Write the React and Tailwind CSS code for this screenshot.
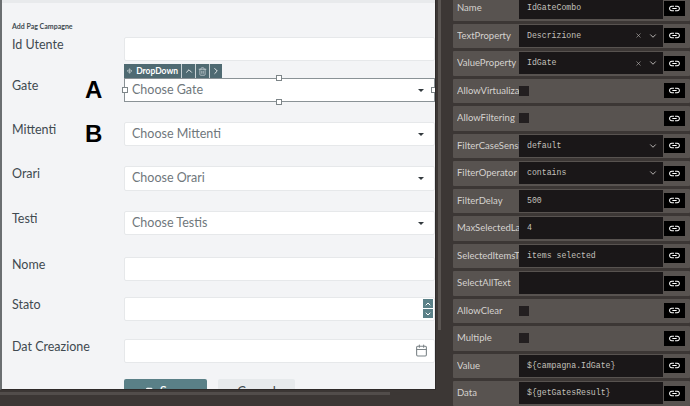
import { Move, ChevronUp, ChevronDown, ChevronRight, Trash2, Calendar, X, Save } from 'lucide-react';
import { MdLink } from 'react-icons/md';

const fields = [
  { label: 'Id Utente', top: 'mt-[34px]', height: 'h-6' },
  { label: 'Gate', top: 'mt-[17px]', height: 'h-6', placeholder: 'Choose Gate', selected: true, mark: 'A' },
  { label: 'Mittenti', top: 'mt-5', height: 'h-6', placeholder: 'Choose Mittenti', mark: 'B' },
  { label: 'Orari', top: 'mt-5', height: 'h-[25px]', placeholder: 'Choose Orari' },
  { label: 'Testi', top: 'mt-5', height: 'h-6', placeholder: 'Choose Testis' },
  { label: 'Nome', top: 'mt-[22px]', height: 'h-6' },
  { label: 'Stato', top: 'mt-4', height: 'h-6', spinner: true },
  { label: 'Dat Creazione', top: 'mt-[18px]', height: 'h-6', date: true },
];

const props = [
  { name: 'Name', value: 'IdGateCombo' },
  { name: 'TextProperty', value: 'Descrizione', select: true },
  { name: 'ValueProperty', value: 'IdGate', select: true },
  { name: 'AllowVirtualizati...', check: true },
  { name: 'AllowFiltering', check: true },
  { name: 'FilterCaseSensiti...', value: 'default', arrow: true },
  { name: 'FilterOperator', value: 'contains', arrow: true },
  { name: 'FilterDelay', value: '500' },
  { name: 'MaxSelectedLab...', value: '4' },
  { name: 'SelectedItemsText', value: 'items selected' },
  { name: 'SelectAllText', value: '' },
  { name: 'AllowClear', check: true },
  { name: 'Multiple', check: true },
  { name: 'Value', value: '${campagna.IdGate}' },
  { name: 'Data', value: '${getGatesResult}' },
];

function Handle({ className }) {
  return <span className={`absolute w-[6px] h-[6px] bg-white border border-[#7d8588] ${className}`} />;
}

function Field({ field }) {
  return (
    <div className={`relative flex ${field.top}`}>
      <div className="w-[112px] text-[12.5px] leading-[16px] text-[#3f4a50]">{field.label}</div>
      {field.mark && (
        <span className="absolute left-[73px] top-[-1px] font-['Liberation_Sans'] font-bold text-[24px] leading-[26px] text-black">{field.mark}</span>
      )}
      <div
        className={`relative flex-1 flex items-center pl-[7px] pr-[10px] bg-white rounded-[2px] border ${field.height} ${field.selected ? 'border-[#8a9296] rounded-none' : 'border-[#e6e8ea]'}`}
      >
        {field.placeholder && <span className="flex-1 text-[12.5px] text-[#6f777c]">{field.placeholder}</span>}
        {field.placeholder && <span className="w-0 h-0 border-x-[3px] border-x-transparent border-t-[3px] border-t-[#333a3e]" />}
        {field.spinner && (
          <div className="absolute right-[1px] top-[1px] flex flex-col gap-[1px]">
            <span className="flex items-center justify-center w-[10px] h-[9px] bg-[#5a8087] text-white"><ChevronUp size={8} strokeWidth={3} /></span>
            <span className="flex items-center justify-center w-[10px] h-[9px] bg-[#5a8087] text-white"><ChevronDown size={8} strokeWidth={3} /></span>
          </div>
        )}
        {field.date && <Calendar size={13} className="absolute right-[6px] top-[4px] text-[#7b8387]" />}
        {field.selected && (
          <>
            <div className="absolute left-[-1px] top-[-15px] flex h-[14px] bg-[#4f6a72] text-white text-[8.5px] font-bold">
              <span className="flex items-center gap-[4px] px-[3px] w-[57px]"><Move size={10} />DropDown</span>
              <span className="flex items-center justify-center w-[14px] border-l border-[#c9d2d5]"><ChevronUp size={10} /></span>
              <span className="flex items-center justify-center w-[14px] border-l border-[#c9d2d5]"><Trash2 size={9} className="text-[#c9d2d5]" /></span>
              <span className="flex items-center justify-center w-[13px] border-l border-[#c9d2d5]"><ChevronRight size={10} /></span>
            </div>
            <Handle className="left-[-3px] top-[8px]" />
            <Handle className="left-[151px] top-[-4px]" />
            <Handle className="left-[151px] bottom-[-4px]" />
            <Handle className="right-[-3px] top-[8px]" />
          </>
        )}
      </div>
    </div>
  );
}

function PropRow({ prop }) {
  return (
    <div className="flex items-center h-[25px] pl-[4px] pr-[5px] bg-[#585350] rounded-[1px]">
      <div className="w-[62px] shrink-0 text-[9.5px] text-[#d5d2cf] whitespace-nowrap overflow-hidden">{prop.name}</div>
      {prop.check ? (
        <div className="flex-1"><div className="w-[10px] h-[10px] bg-[#231f20]" /></div>
      ) : (
        <div className="flex-1 flex items-center h-[22px] pl-[8px] pr-[5px] bg-[#1a1718] font-['Liberation_Mono'] text-[8.2px] text-[#c4c1bd]">
          <span className="flex-1">{prop.value}</span>
          {prop.select && <X size={7} className="mr-[6px] text-[#bdbab6]" />}
          {(prop.select || prop.arrow) && <ChevronDown size={10} className="text-[#d5d2cf]" />}
        </div>
      )}
      <div className="flex items-center justify-center w-[21px] h-[15px] ml-[1px] bg-black text-white">
        <MdLink size={13} />
      </div>
    </div>
  );
}

export default function App() {
  return (
    <div className="flex w-[690px] h-[406px] overflow-hidden bg-[#3c3735] font-['Lato',sans-serif]">
      <div className="w-[436px] shrink-0">
        <div className="h-[390px] overflow-hidden bg-[#f3f4f6] border-l-2 border-r border-b border-l-[#6b6f71] border-r-[#2e2a29] border-b-[#2e2a29]">
          <div className="h-[3px] bg-[#e8eaec]" />
          <div className="pl-[10px]">
            <div className="h-0 relative top-[19px] text-[7px] leading-[9px] font-bold text-[#3f4a50]">Add Pag Campagne</div>
            {fields.map((field) => (
              <Field key={field.label} field={field} />
            ))}
            <div className="flex gap-[11px] mt-[16px] ml-[112px] text-[13px]">
              <button className="flex items-center justify-center gap-[5px] w-[83px] h-[26px] bg-[#5a8087] text-white rounded-[2px]">
                <Save size={10} fill="white" /> Save
              </button>
              <button className="w-[77px] h-[26px] bg-[#e7eaec] text-[#3f4a50] rounded-[2px]">Cancel</button>
            </div>
          </div>
        </div>
        <div className="w-[390px] h-[3px] mt-[2px] bg-[#524d4b]" />
      </div>
      <div className="flex-1 flex min-w-0">
        <div className="w-[17px] shrink-0 pl-[2px]">
          <div className="w-[3px] h-[330px] bg-[#5a5552]" />
        </div>
        <div className="flex-1 flex flex-col gap-[2.57px] mt-[-4px]">
          {props.map((prop) => (
            <PropRow key={prop.name} prop={prop} />
          ))}
        </div>
      </div>
    </div>
  );
}
